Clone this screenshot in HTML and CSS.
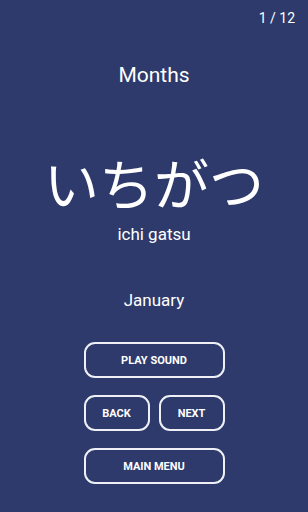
FILE: index.html
```html
<!DOCTYPE html>
<html lang="en">
<head>
    <meta charset="UTF-8">
    <meta name="viewport" content="width=device-width, initial-scale=1.0">
    <title>Months</title>
    <link rel="stylesheet" href="styles.css">
</head>
<body>
    <div class="card-screen">
        <div class="counter">1 / 12</div>
        <h2 class="category">Months</h2>
        <div class="kana">いちがつ</div>
        <div class="romaji">ichi gatsu</div>
        <div class="meaning">January</div>
        <div class="button-group">
            <button class="btn">PLAY SOUND</button>
            <div class="btn-row">
                <button class="btn">BACK</button>
                <button class="btn">NEXT</button>
            </div>
            <button class="btn">MAIN MENU</button>
        </div>
    </div>
</body>
</html>
```

FILE: styles.css
```css
body {
    margin: 0;
    background-color: #2d3a6b;
    font-family: Roboto, "Noto Sans", sans-serif;
    color: #ffffff;
}
.card-screen {
    height: 512px;
    padding-top: 10px;
    box-sizing: border-box;
    display: flex;
    flex-direction: column;
    align-items: center;
}
.counter {
    align-self: flex-end;
    margin-right: 13px;
    font-size: 14px;
    line-height: 16px;
}
.category {
    margin: 36px 0 0;
    font-size: 21px;
    font-weight: normal;
    line-height: 26px;
}
.kana {
    margin-top: 61px;
    font-family: "Noto Sans CJK JP", sans-serif;
    font-size: 55px;
    line-height: 64px;
}
.romaji {
    margin-top: 11px;
    font-size: 17px;
    line-height: 20px;
}
.meaning {
    margin-top: 46px;
    font-size: 17px;
    line-height: 20px;
}
.button-group {
    margin-top: 32px;
    width: 141px;
    display: flex;
    flex-direction: column;
    gap: 17px;
}
.btn-row {
    display: flex;
    gap: 9px;
}
.btn {
    height: 36px;
    background: transparent;
    color: #ffffff;
    border: 2px solid #eef0f6;
    border-radius: 11px;
    font-family: Roboto, sans-serif;
    font-size: 11px;
    font-weight: bold;
    padding: 0;
}
.btn-row .btn {
    flex: 1;
}
```
